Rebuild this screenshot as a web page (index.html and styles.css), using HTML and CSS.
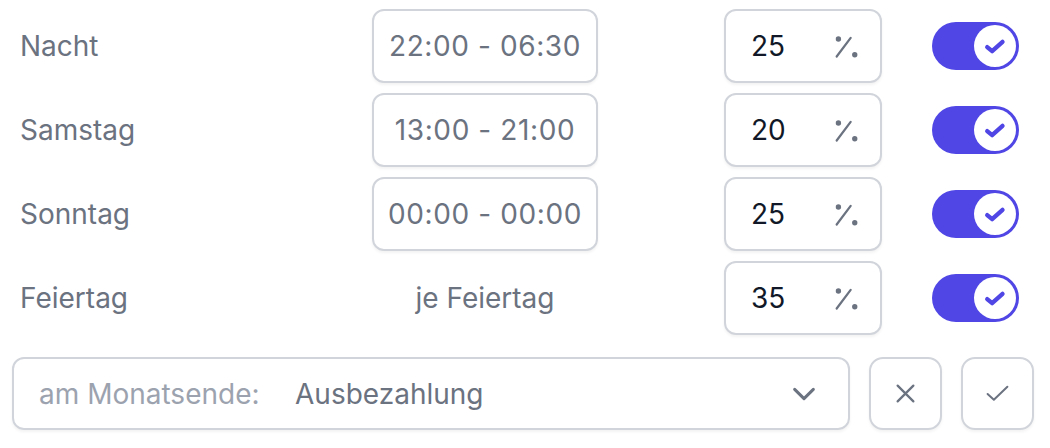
FILE: index.html
```html
<!DOCTYPE html>
<html lang="de">
<head>
<meta charset="utf-8">
<link rel="stylesheet" href="styles.css">
</head>
<body>
<div class="panel">
  <div class="rows">
    <div class="label">Nacht</div>
    <div class="box time">22:00 - 06:30</div>
    <div class="box pct"><span class="num">25</span><svg class="pct-ic" viewBox="0 0 24 24"><path d="M4 21 L16 5" /><circle cx="5.5" cy="6" r="2.3"/><circle cx="19.5" cy="19.5" r="2.3"/></svg></div>
    <div class="toggle"><span class="knob"><svg viewBox="0 0 20 20"><path d="M4 10.8 L7.8 14 L15.8 6.8"/></svg></span></div>

    <div class="label">Samstag</div>
    <div class="box time">13:00 - 21:00</div>
    <div class="box pct"><span class="num">20</span><svg class="pct-ic" viewBox="0 0 24 24"><path d="M4 21 L16 5" /><circle cx="5.5" cy="6" r="2.3"/><circle cx="19.5" cy="19.5" r="2.3"/></svg></div>
    <div class="toggle"><span class="knob"><svg viewBox="0 0 20 20"><path d="M4 10.8 L7.8 14 L15.8 6.8"/></svg></span></div>

    <div class="label">Sonntag</div>
    <div class="box time">00:00 - 00:00</div>
    <div class="box pct"><span class="num">25</span><svg class="pct-ic" viewBox="0 0 24 24"><path d="M4 21 L16 5" /><circle cx="5.5" cy="6" r="2.3"/><circle cx="19.5" cy="19.5" r="2.3"/></svg></div>
    <div class="toggle"><span class="knob"><svg viewBox="0 0 20 20"><path d="M4 10.8 L7.8 14 L15.8 6.8"/></svg></span></div>

    <div class="label">Feiertag</div>
    <div class="plain">je Feiertag</div>
    <div class="box pct"><span class="num">35</span><svg class="pct-ic" viewBox="0 0 24 24"><path d="M4 21 L16 5" /><circle cx="5.5" cy="6" r="2.3"/><circle cx="19.5" cy="19.5" r="2.3"/></svg></div>
    <div class="toggle"><span class="knob"><svg viewBox="0 0 20 20"><path d="M4 10.8 L7.8 14 L15.8 6.8"/></svg></span></div>
  </div>

  <div class="footer">
    <div class="select">
      <span class="prefix">am Monatsende:</span>
      <span class="value">Ausbezahlung</span>
      <svg class="chev" viewBox="0 0 24 24"><path d="M4 8 L12 16 L20 8"/></svg>
    </div>
    <button class="btn"><svg viewBox="0 0 24 24"><path d="M5 5 L19 19 M19 5 L5 19"/></svg></button>
    <button class="btn"><svg viewBox="0 0 24 24" class="ok"><path d="M2.5 12.5 L8.5 18 L21.5 5.5"/></svg></button>
  </div>
</div>
</body>
</html>
```

FILE: styles.css
```css
* { box-sizing: border-box; }
html, body { margin: 0; padding: 0; background: #ffffff; }
body {
  font-family: Inter, "Noto Sans", "Liberation Sans", sans-serif;
  font-size: 28px;
  color: #6b7280;
  width: 1050px;
  height: 448px;
  overflow: hidden;
}
.panel {
  padding: 9px 16px 0 12px;
}
.rows {
  display: grid;
  grid-template-columns: 360px 226px 126px 158px 50px 87px;
  grid-auto-rows: 74px;
  row-gap: 10px;
  align-items: center;
}
.label {
  grid-column: 1;
  padding-left: 8px;
  color: #6b7280;
}
.time, .plain { grid-column: 2; }
.box {
  height: 74px;
  border: 2px solid #d1d5db;
  border-radius: 12px;
  background: #fff;
  box-shadow: 0 2px 3px rgba(0,0,0,0.05);
  display: flex;
  align-items: center;
}
.time {
  justify-content: center;
  color: #6b7280;
  letter-spacing: 0.6px;
}
.plain {
  text-align: center;
  color: #6b7280;
}
.pct {
  grid-column: 4;
  padding: 0 20px 0 25px;
  justify-content: space-between;
}
.num { color: #111827; }
.pct-ic {
  width: 28px;
  height: 28px;
  stroke: #6b7280;
  stroke-width: 1.9;
  stroke-linecap: round;
  fill: #6b7280;
}
.pct-ic circle { stroke: none; }
.toggle {
  grid-column: 6;
  width: 87px;
  height: 48px;
  border-radius: 24px;
  background: #4f46e5;
  display: flex;
  align-items: center;
  justify-content: flex-end;
  padding-right: 3px;
}
.knob {
  width: 42px;
  height: 42px;
  border-radius: 50%;
  background: #fff;
  display: flex;
  align-items: center;
  justify-content: center;
}
.knob svg {
  width: 26px;
  height: 26px;
  fill: none;
  stroke: #4f46e5;
  stroke-width: 3.3;
  stroke-linecap: round;
  stroke-linejoin: round;
}
.footer {
  display: flex;
  align-items: center;
  gap: 19px;
  margin-top: 22px;
}
.select {
  width: 840px;
  height: 73px;
  border: 2px solid #d1d5db;
  border-radius: 12px;
  box-shadow: 0 2px 3px rgba(0,0,0,0.05);
  display: flex;
  align-items: center;
  padding: 0 30px 0 25px;
}
.prefix { color: #9ca3af; width: 256px; }
.value { color: #6b7280; flex: 1; }
.chev {
  width: 28px;
  height: 28px;
  fill: none;
  stroke: #6b7280;
  stroke-width: 2.6;
  stroke-linecap: round;
  stroke-linejoin: round;
}
.btn {
  width: 73px;
  height: 73px;
  border: 2px solid #d1d5db;
  border-radius: 14px;
  background: #fff;
  box-shadow: 0 2px 3px rgba(0,0,0,0.05);
  display: flex;
  align-items: center;
  justify-content: center;
  padding: 0;
}
.btn svg {
  width: 27px;
  height: 27px;
  fill: none;
  stroke: #6b7280;
  stroke-width: 2;
  stroke-linecap: round;
  stroke-linejoin: round;
}
.btn svg.ok { width: 25px; height: 25px; stroke-width: 1.9; }
```
